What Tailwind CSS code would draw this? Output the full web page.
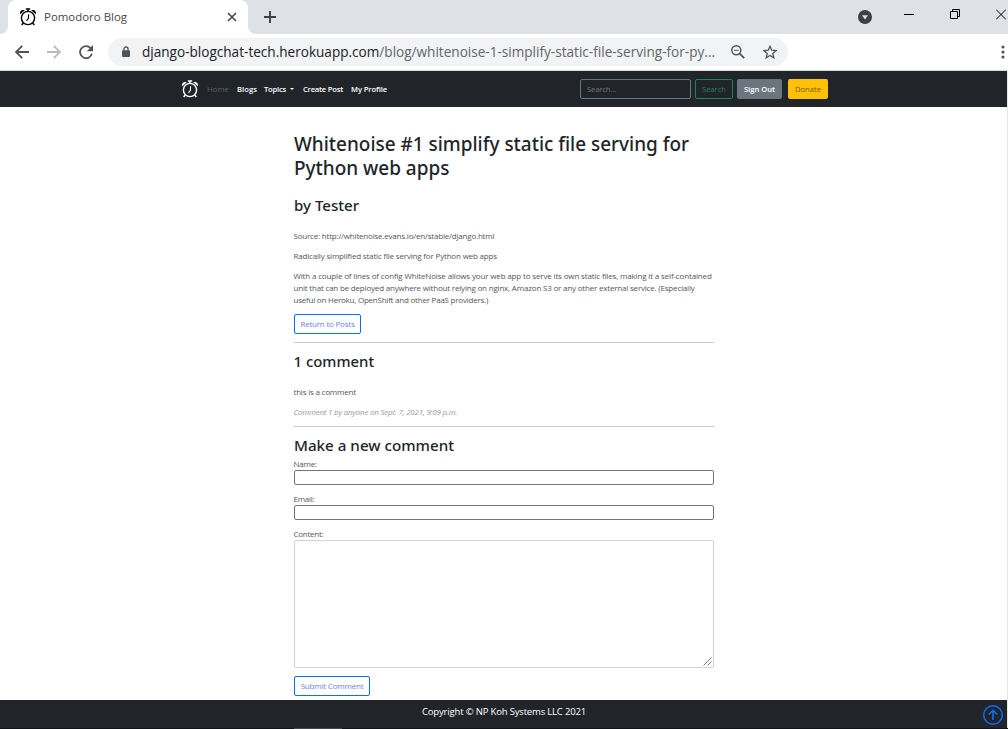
<!DOCTYPE html>
<html lang="en">
<head>
<meta charset="utf-8">
<title>Pomodoro Blog</title>
<script src="https://cdn.jsdelivr.net/npm/@tailwindcss/browser@4"></script>
</head>
<body class="flex h-[729px] w-[1008px] flex-col overflow-hidden bg-white font-['Open_Sans','Noto_Sans',sans-serif] whitespace-nowrap text-[#212529]">
<svg class="hidden">
  <symbol id="clock" viewBox="0 0 18 18">
    <g fill="none" stroke="currentColor">
      <circle cx="9" cy="10" r="6.6" stroke-width="1.4"/>
      <path d="M9 3.5V1.2M6.8 1.1h4.4M4.3 15l-1.6 2M13.7 15l1.6 2" stroke-width="1.5"/>
      <path d="M9.6 6.2l-.2 4.2-1.9 2.4" stroke-width="1.1"/>
    </g>
    <path fill="currentColor" d="M1.2 6.2C.2 3.6 2.8 1 5.8 2.2ZM16.8 6.2c1-2.6-1.6-5.2-4.6-4Z"/>
  </symbol>
</svg>

<!-- Tab strip -->
<div class="flex h-[34px] shrink-0 bg-[#dee1e6]">
  <div class="flex w-2 items-end bg-white"><div class="h-full w-full rounded-br-lg bg-[#dee1e6]"></div></div>
  <div class="flex w-[240px] items-center rounded-t-lg bg-white pl-[11px]">
    <svg class="h-[18px] w-[18px] text-black"><use href="#clock"/></svg>
    <span class="ml-[7px] text-[11.44px] text-[#45494d]">Pomodoro Blog</span>
    <svg class="mr-[11px] ml-auto h-[10px] w-[10px]" viewBox="0 0 10 10" stroke="#45494d" stroke-width="1.6"><path d="M1 1l8 8M9 1L1 9"/></svg>
  </div>
  <div class="flex w-2 bg-white"><div class="h-full w-full rounded-bl-lg bg-[#dee1e6]"></div></div>
  <svg class="mt-[11px] ml-2 h-3 w-3" viewBox="0 0 12 12" stroke="#3c4043" stroke-width="1.9"><path d="M6 0v12M0 6h12"/></svg>
  <div class="ml-auto flex">
    <svg class="mt-[10px] h-[14px] w-[14px]" viewBox="0 0 14 14"><circle cx="7" cy="7" r="7" fill="#3c4043"/><path d="M4 5.2h6L7 9.6z" fill="#dee1e6"/></svg>
    <svg class="mt-[9px] ml-8 h-[11px] w-[10px]" viewBox="0 0 10 11" stroke="#000"><path d="M0 5.5h10"/></svg>
    <svg class="mt-[9px] ml-9 h-[11px] w-[10px]" viewBox="0 0 10 11" fill="none" stroke="#000"><path d="M.5 2.5h7v7h-7zM2.5 2.5v-2h7v7h-2"/></svg>
    <svg class="mt-[9px] ml-9 h-[11px] w-[10px]" viewBox="0 0 10 11" stroke="#000"><path d="M0 .5l10 10M10 .5L0 10.5"/></svg>
    <div class="w-[2px]"></div>
  </div>
</div>

<!-- Address bar -->
<div class="flex h-[37px] shrink-0 items-center border-b border-[#d5dbdb] bg-white pl-[15px]">
  <svg class="h-[14px] w-[14px]" viewBox="0 0 14 14" fill="none" stroke="#505458" stroke-width="1.8"><path d="M14 7H1.3M7.2 .8L1 7l6.2 6.2"/></svg>
  <svg class="ml-[18px] h-[14px] w-[14px]" viewBox="0 0 14 14" fill="none" stroke="#b9bbbe" stroke-width="1.8"><path d="M0 7h12.7M6.8 .8L13 7l-6.2 6.2"/></svg>
  <svg class="ml-[18px] h-[14px] w-[14px]" viewBox="0 0 14 14"><path d="M11.6 3.2A6 6 0 1 0 12.9 8.6" fill="none" stroke="#505458" stroke-width="1.8"/><path d="M14 0v6.2H7.8z" fill="#505458"/></svg>
  <div class="ml-[15px] flex h-7 w-[680px] items-center rounded-full bg-[#f1f3f4] pl-[14px]">
    <svg class="h-3 w-2" viewBox="0 0 8 12"><path d="M2 5V3a2 2 0 0 1 4 0v2" fill="none" stroke="#505458" stroke-width="1.3"/><rect y="4.3" width="8" height="6.8" rx="1" fill="#505458"/></svg>
    <span class="ml-[12px] w-[573px] text-[13.58px] text-[#62666a]"><span class="text-[#202124]">django-blogchat-tech.herokuapp.com</span>/blog/whitenoise-1-simplify-static-file-serving-for-py...</span>
    <svg class="ml-4 h-[14px] w-[14px]" viewBox="0 0 14 14" fill="none" stroke="#505458"><circle cx="5.3" cy="5.3" r="4.5" stroke-width="1.5"/><path d="M3 5.3h4.6"/><path d="M8.7 8.7l4.5 4.5" stroke-width="1.8"/></svg>
    <svg class="ml-[18px] h-[14px] w-[14px]" viewBox="0 0 14 14" fill="none" stroke="#505458" stroke-width="1.3"><path d="M7 1.2l1.7 4 4.4.4-3.3 2.9 1 4.3L7 10.5l-3.8 2.3 1-4.3L.9 5.6l4.4-.4z"/></svg>
  </div>
  <svg class="mr-[3px] ml-auto h-[14px] w-[4px]" viewBox="0 0 4 14" fill="#505458"><circle cx="2" cy="2" r="1.6"/><circle cx="2" cy="7" r="1.6"/><circle cx="2" cy="12" r="1.6"/></svg>
</div>

<!-- Page -->
<div class="flex h-[657px] shrink-0 border-r border-[#e6e6e6]">
  <div class="flex w-full flex-col">
    <nav class="flex h-9 shrink-0 items-center bg-[#212529] pl-[181px] text-[7.6px] leading-3 font-semibold text-white">
      <svg class="h-[18px] w-[18px]"><use href="#clock"/></svg>
      <span class="ml-[8px] w-[30px] font-normal tracking-[0.13px] text-[#5d6165]">Home</span>
      <span class="w-[27px] tracking-[0.06px]">Blogs</span>
      <span class="flex w-[39px] items-center tracking-[-0.21px]">Topics<i class="ml-1 border-x-[2.5px] border-t-[2.5px] border-x-transparent border-t-white"></i></span>
      <span class="w-[48px] tracking-[-0.2px]">Create Post</span>
      <span class="tracking-[-0.1px]">My Profile</span>
      <div class="mr-[179px] ml-auto flex h-5 font-normal">
        <span class="flex w-[111px] items-center rounded-[2px] border border-[#6c757d] pl-1.5 tracking-[-0.11px] text-[#6c757d]">Search...</span>
        <span class="ml-1 flex w-[38px] items-center justify-center rounded-[2px] border border-[#198754] text-[#198754]">Search</span>
        <span class="ml-1 flex w-[45px] items-center justify-center rounded-[2px] bg-[#6c757d] font-semibold text-white">Sign Out</span>
        <span class="ml-1.5 flex w-10 items-center justify-center rounded-[2px] bg-[#ffc107] text-[#75591c]">Donate</span>
      </div>
    </nav>

    <main class="ml-[294px] flex w-[420px] grow flex-col pt-[25px] text-[8px] leading-3 tracking-[-0.2px] text-[#54575b]">
      <h1 class="font-['Noto_Sans','Open_Sans',sans-serif] text-[18.96px] leading-6 font-medium tracking-normal text-[#212529]">Whitenoise #1 simplify static file serving for<br>Python web apps</h1>
      <h2 class="mt-4 font-['Noto_Sans','Open_Sans',sans-serif] text-[15.05px] leading-[19px] font-medium tracking-normal text-[#212529]">by Tester</h2>
      <p class="mt-[15px] -ml-[0.5px]">Source: http://whitenoise.evans.io/en/stable/django.html</p>
      <p class="mt-2 -ml-[0.5px] tracking-[-0.178px]">Radically simplified static file serving for Python web apps</p>
      <p class="mt-2 -ml-[0.5px]"><span class="tracking-[-0.153px]">With a couple of lines of config WhiteNoise allows your web app to serve its own static files, making it a self-contained</span><br><span class="tracking-[-0.192px]">unit that can be deployed anywhere without relying on nginx, Amazon S3 or any other external service. (Especially</span><br><span class="tracking-[-0.225px]">useful on Heroku, OpenShift and other PaaS providers.)</span></p>
      <button class="mt-2 flex h-5 w-[67px] shrink-0 items-center justify-center rounded-[2px] border border-[#0d6efd] tracking-[-0.22px] text-[#6c7ff0]">Return to Posts</button>
      <hr class="mt-2 border-[#c8c9ca]">
      <h2 class="mt-[9px] -ml-[0.5px] font-['Noto_Sans','Open_Sans',sans-serif] text-[14.9px] leading-[19px] font-medium tracking-normal text-[#212529]">1 comment</h2>
      <p class="mt-[15px] -ml-[0.5px] tracking-[-0.2px]">this is a comment</p>
      <p class="mt-2 -ml-[0.5px] tracking-[-0.24px] text-[#999b9e] italic">Comment 1 by anyone on Sept. 7, 2021, 9:09 p.m.</p>
      <hr class="mt-2 border-[#c8c9ca]">
      <h2 class="mt-[9px] font-['Noto_Sans','Open_Sans',sans-serif] text-[15.18px] leading-[19px] font-medium tracking-normal text-[#212529]">Make a new comment</h2>
      <label class="mt-[3px] -ml-[0.5px] tracking-[-0.25px]">Name:</label>
      <input class="h-[15px] shrink-0 rounded-[2px] border border-[#767676]">
      <label class="mt-2 -ml-[0.5px] tracking-[-0.25px]">Email:</label>
      <input class="h-[15px] shrink-0 rounded-[2px] border border-[#767676]">
      <label class="mt-2 -ml-[0.5px] tracking-[-0.25px]">Content:</label>
      <div class="flex h-32 shrink-0 items-end justify-end rounded-[2px] border border-[#ced4da]">
        <svg class="mr-px mb-px h-[9px] w-[9px]" viewBox="0 0 9 9" stroke="#555" stroke-width=".8"><path d="M.5 8.5l8-8M4.5 8.5l4-4"/></svg>
      </div>
      <button class="mt-2 flex h-5 w-[76px] shrink-0 items-center justify-center rounded-[2px] border border-[#0d6efd] tracking-[-0.2px] text-[#6c7ff0]">Submit Comment</button>
    </main>

    <footer class="relative flex h-7 shrink-0 justify-center bg-[#212529] pt-[5px] pl-px text-[9.5px] leading-[14px] tracking-[-0.17px] text-white">
      <span>Copyright © NP Koh Systems LLC 2021</span>
      <svg class="absolute top-[5px] right-[4px] h-5 w-5" viewBox="0 0 20 20" fill="none" stroke="#0d6efd" stroke-width="1.4"><circle cx="10" cy="10" r="9.3"/><path d="M10 15V5.5M5.8 9.5L10 5.3l4.2 4.2" stroke-width="1.6"/></svg>
    </footer>
  </div>
</div>
<div class="flex h-px shrink-0 bg-[#111417] pl-[294px]"><div class="w-[48px] bg-[#454749]"></div></div>
</body>
</html>
